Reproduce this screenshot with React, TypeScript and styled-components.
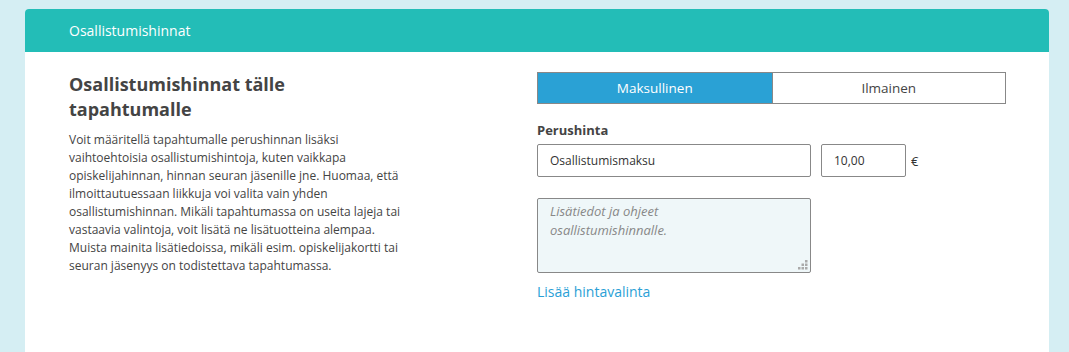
import React, { useState } from 'react'
import styled, { createGlobalStyle } from 'styled-components'

const GlobalStyle = createGlobalStyle`
    html, body {
        margin: 0;
        padding: 0;
        background-color: #d5eef3;
        font-family: 'Open Sans', 'Noto Sans', sans-serif;
        color: #444;
    }
`

export default function App() {
    const [isPaid, setIsPaid] = useState(true)
    const [name, setName] = useState('Osallistumismaksu')
    const [price, setPrice] = useState('10,00')

    return (
        <>
            <GlobalStyle />
            <Page>
                <Card>
                    <CardHeader>Osallistumishinnat</CardHeader>
                    <CardBody>
                        <InfoColumn>
                            <Title>Osallistumishinnat tälle tapahtumalle</Title>
                            <Description>
                                Voit määritellä tapahtumalle perushinnan lisäksi
                                vaihtoehtoisia osallistumishintoja, kuten vaikkapa
                                opiskelijahinnan, hinnan seuran jäsenille jne. Huomaa,
                                että ilmoittautuessaan liikkuja voi valita vain yhden
                                osallistumishinnan. Mikäli tapahtumassa on useita lajeja
                                tai vastaavia valintoja, voit lisätä ne lisätuotteina
                                alempaa. Muista mainita lisätiedoissa, mikäli esim.
                                opiskelijakortti tai seuran jäsenyys on todistettava
                                tapahtumassa.
                            </Description>
                        </InfoColumn>
                        <FormColumn>
                            <Toggle>
                                <ToggleButton $active={isPaid} onClick={() => setIsPaid(true)}>
                                    Maksullinen
                                </ToggleButton>
                                <ToggleButton $active={!isPaid} onClick={() => setIsPaid(false)}>
                                    Ilmainen
                                </ToggleButton>
                            </Toggle>
                            <Label>Perushinta</Label>
                            <PriceRow>
                                <NameInput
                                    value={name}
                                    onChange={(e) => setName(e.target.value)}
                                />
                                <PriceInput
                                    value={price}
                                    onChange={(e) => setPrice(e.target.value)}
                                />
                                <Currency>€</Currency>
                            </PriceRow>
                            <AreaWrapper>
                                <InfoArea
                                    autoFocus
                                    placeholder="Lisätiedot ja ohjeet osallistumishinnalle."
                                />
                                <Grip>
                                    <svg width="10" height="10" viewBox="0 0 10 10">
                                        <rect x="7" y="0" width="2.5" height="2.5" fill="#aaa" />
                                        <rect x="3.5" y="3.5" width="2.5" height="2.5" fill="#aaa" />
                                        <rect x="7" y="3.5" width="2.5" height="2.5" fill="#aaa" />
                                        <rect x="0" y="7" width="2.5" height="2.5" fill="#aaa" />
                                        <rect x="3.5" y="7" width="2.5" height="2.5" fill="#aaa" />
                                        <rect x="7" y="7" width="2.5" height="2.5" fill="#aaa" />
                                    </svg>
                                </Grip>
                            </AreaWrapper>
                            <AddLink href="#">Lisää hintavalinta</AddLink>
                        </FormColumn>
                    </CardBody>
                </Card>
            </Page>
        </>
    )
}

const Page = styled.div`
    padding: 9px 20px 0 25px;
    height: 343px;
    overflow: hidden;
`

const Card = styled.div`
    width: 1024px;
    height: 360px;
    background-color: #fff;
    border-radius: 4px 4px 0 0;
    overflow: hidden;
`

const CardHeader = styled.div`
    height: 43px;
    background-color: #23bdb7;
    color: #fff;
    font-size: 14px;
    line-height: 43px;
    padding-left: 44px;
`

const CardBody = styled.div`
    display: grid;
    grid-template-columns: 468px 469px;
    padding: 20px 44px 0 44px;
`

const InfoColumn = styled.div`
    max-width: 340px;
`

const Title = styled.h2`
    margin: 0;
    font-size: 18px;
    font-weight: 700;
    line-height: 25px;
    color: #444;
`

const Description = styled.p`
    margin: 9px 0 0;
    font-size: 12px;
    line-height: 18px;
    color: #444;
`

const FormColumn = styled.div`
    display: flex;
    flex-direction: column;
    align-items: flex-start;
`

const Toggle = styled.div`
    display: grid;
    grid-template-columns: 1fr 1fr;
    width: 469px;
    height: 32px;
    box-sizing: border-box;
    border: 1px solid #888;
`

const ToggleButton = styled.button<{ $active: boolean }>`
    border: none;
    margin: 0;
    padding: 0;
    font-family: inherit;
    font-size: 13.5px;
    cursor: pointer;
    background-color: ${(p) => (p.$active ? '#2aa1d5' : '#fff')};
    color: ${(p) => (p.$active ? '#fff' : '#444')};
    & + & {
        border-left: 1px solid #888;
    }
`

const Label = styled.div`
    margin-top: 17px;
    font-size: 13px;
    font-weight: 700;
    color: #444;
    line-height: 18px;
`

const PriceRow = styled.div`
    display: flex;
    align-items: center;
    gap: 10px;
    margin-top: 5px;
`

const BaseInput = styled.input`
    box-sizing: border-box;
    height: 33px;
    border: 1px solid #888;
    border-radius: 2px;
    padding: 0 12px;
    font-family: inherit;
    font-size: 12px;
    color: #333;
    outline: none;
`

const NameInput = styled(BaseInput)`
    width: 274px;
`

const PriceInput = styled(BaseInput)`
    width: 85px;
`

const Currency = styled.span`
    margin-left: -5px;
    font-size: 13px;
    color: #333;
`

const AreaWrapper = styled.div`
    position: relative;
    margin-top: 21px;
    width: 274px;
    height: 75px;
`

const InfoArea = styled.textarea`
    display: block;
    box-sizing: border-box;
    width: 100%;
    height: 100%;
    margin: 0;
    resize: none;
    border: 1px solid #888;
    border-radius: 2px;
    background-color: #eff7f9;
    padding: 3px 40px 5px 12px;
    font-family: inherit;
    font-size: 13px;
    line-height: 19px;
    color: #333;
    caret-color: #222;
    outline: none;
    &::placeholder {
        color: #888;
        font-style: italic;
    }
`

const Grip = styled.span`
    position: absolute;
    right: 3px;
    bottom: 3px;
    width: 10px;
    height: 10px;
    pointer-events: none;
    svg {
        display: block;
    }
`

const AddLink = styled.a`
    margin-top: 9px;
    font-size: 14px;
    color: #2a9fd6;
    text-decoration: none;
`
